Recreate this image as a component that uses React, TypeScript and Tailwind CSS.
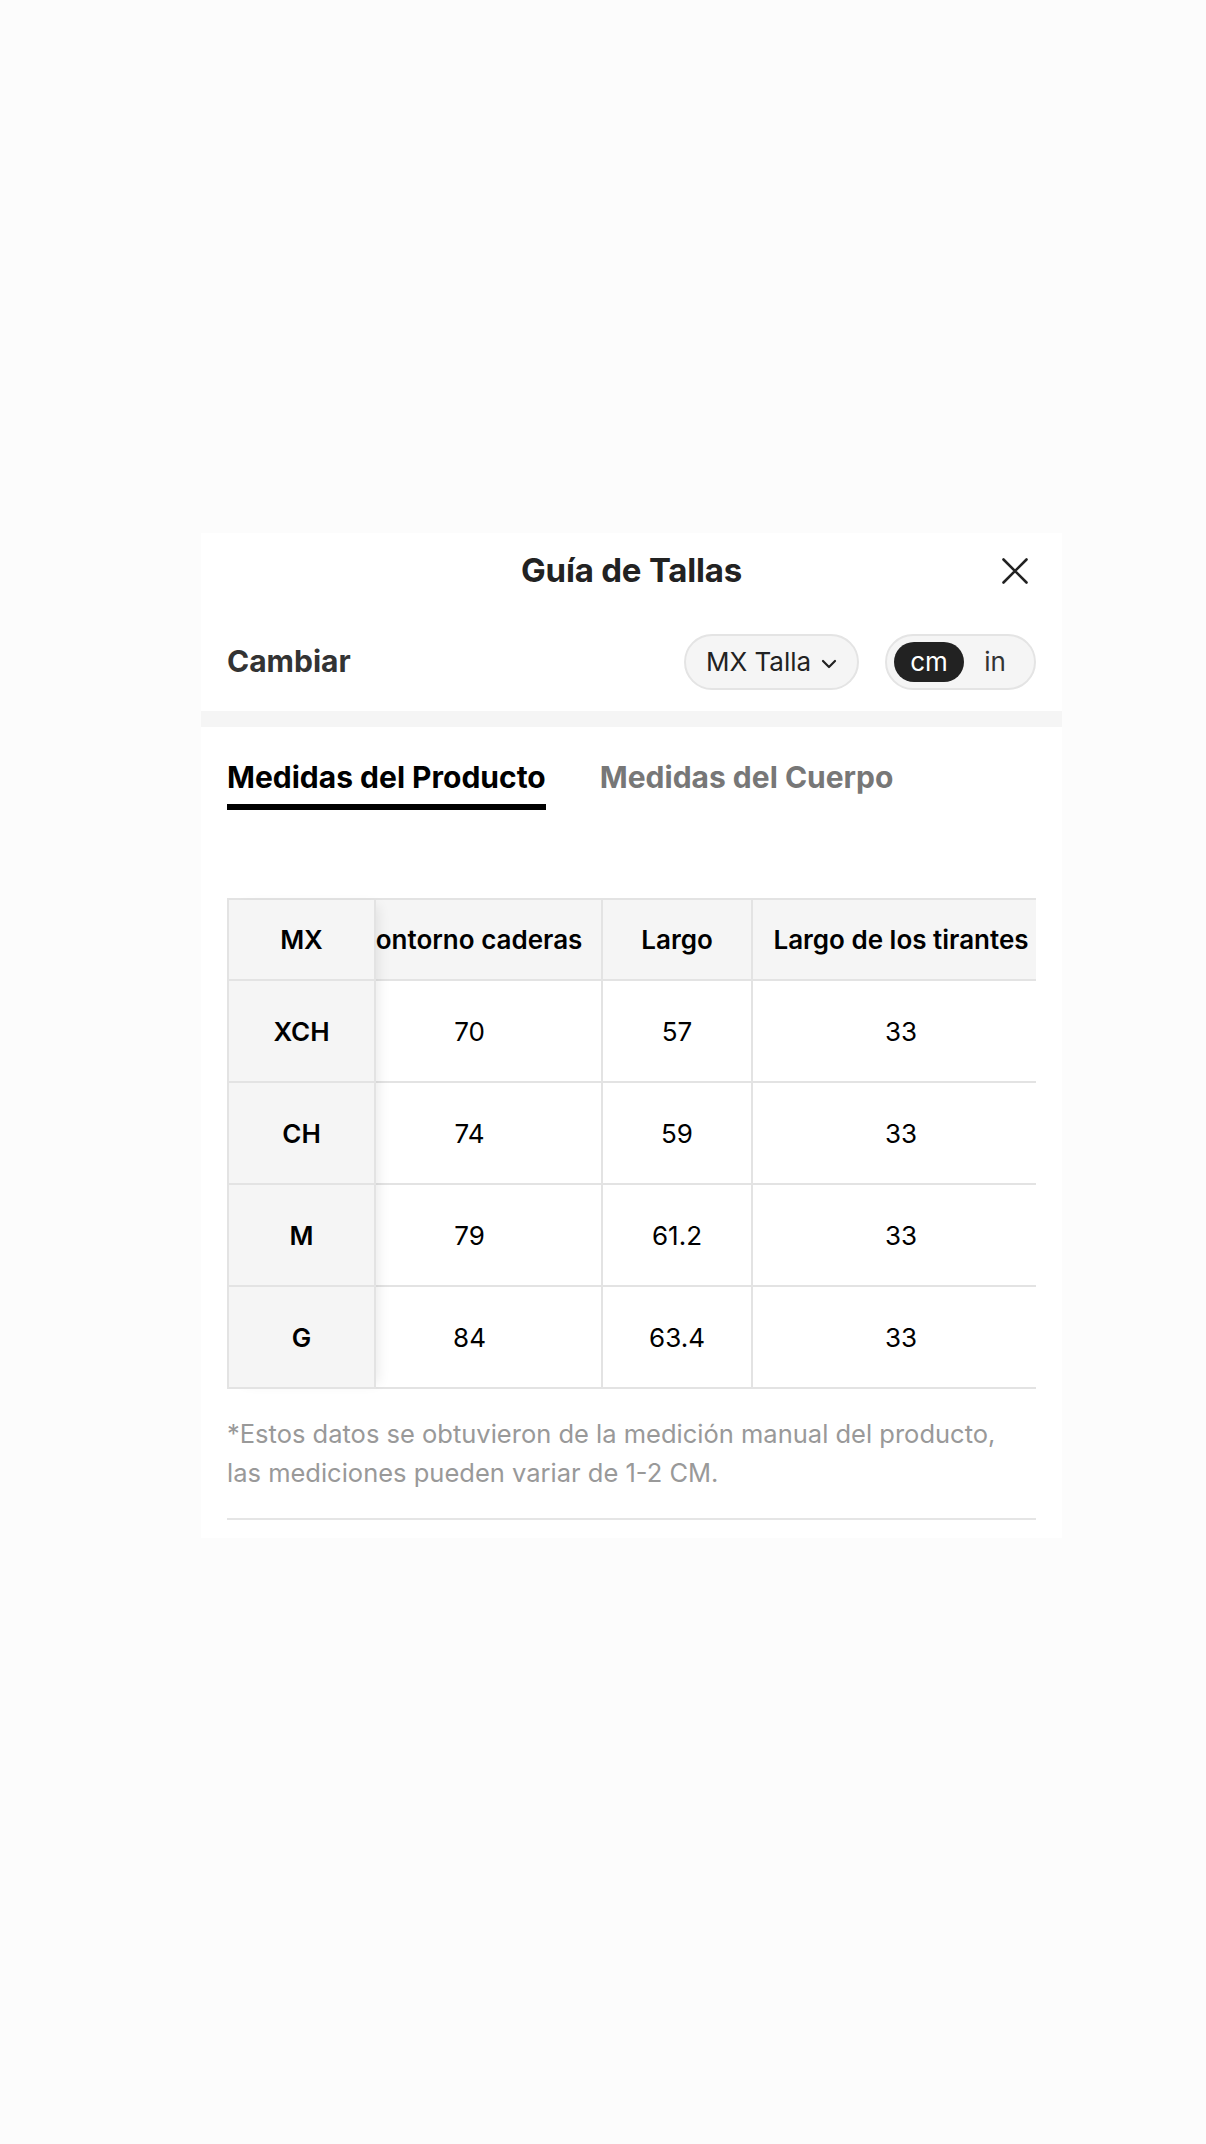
import React from "react";

const font = { fontFamily: 'Inter, "Noto Sans", "Liberation Sans", sans-serif' };

const rows = [
  { s: "XCH", a: "70", b: "57", c: "33" },
  { s: "CH", a: "74", b: "59", c: "33" },
  { s: "M", a: "79", b: "61.2", c: "33" },
  { s: "G", a: "84", b: "63.4", c: "33" },
];

export default function App() {
  return (
    <div className="min-h-[2144px] w-full bg-[#fcfcfc] pt-[533px]" style={font}>
      <div className="ml-[201px] w-[861px] bg-white pb-[18px]">
        {/* Header */}
        <div className="grid h-[75px] grid-cols-[1fr_auto_1fr] items-center pt-[1px]">
          <div />
          <div className="text-[33px] font-bold tracking-[-0.2px] text-[#222]">Guía de Tallas</div>
          <div className="flex justify-end pr-[34px]">
            <svg width="26" height="26" viewBox="0 0 26 26" fill="none">
              <path d="M1.5 1.5 24.5 24.5M24.5 1.5 1.5 24.5" stroke="#222" strokeWidth="2.6" strokeLinecap="round" />
            </svg>
          </div>
        </div>

        {/* Cambiar row */}
        <div className="flex h-[103px] items-center justify-between px-[26px] pt-[4px]">
          <div className="text-[30px] font-bold text-[#333]">Cambiar</div>
          <div className="flex items-center gap-[26px]">
            <div className="flex h-[56px] w-[175px] items-center justify-center gap-[10px] rounded-full border-2 border-[#e4e4e4] bg-[#f5f5f5]">
              <span className="text-[26px] text-[#222]">MX Talla</span>
              <svg width="16" height="10" viewBox="0 0 16 10" fill="none" className="mt-[4px]">
                <path d="M2 2 8 8 14 2" stroke="#222" strokeWidth="2.2" strokeLinecap="round" strokeLinejoin="round" />
              </svg>
            </div>
            <div className="flex h-[56px] w-[151px] items-center rounded-full border-2 border-[#e4e4e4] bg-[#f5f5f5] pl-[7px]">
              <div className="flex h-[40px] w-[70px] items-center justify-center rounded-full bg-[#222] text-[26px] text-white">
                cm
              </div>
              <div className="flex flex-1 justify-center pr-[8px] text-[26px] text-[#333]">in</div>
            </div>
          </div>
        </div>

        {/* gray band */}
        <div className="h-[16px] bg-[#f5f5f5]" />

        {/* Tabs */}
        <div className="flex gap-[54px] px-[26px] pt-[32px]">
          <div className="flex flex-col">
            <div className="text-[30px] font-bold leading-[36px] text-black">Medidas del Producto</div>
            <div className="mt-[9px] h-[6px] bg-black" />
          </div>
          <div className="text-[30px] font-bold leading-[36px] text-[#777]">Medidas del Cuerpo</div>
        </div>

        {/* Table */}
        <div className="mx-[26px] mt-[88px] flex w-[809px] border-l-2 border-t-2 border-[#e3e3e3]">
          <div className="relative z-10 flex w-[147px] shrink-0 flex-col bg-[#f5f5f5] shadow-[8px_0_12px_-6px_rgba(0,0,0,0.09)]">
            <div className="flex h-[81px] items-center justify-center border-b-2 border-r-2 border-[#e3e3e3] text-[26px] font-semibold text-black">
              MX
            </div>
            {rows.map((r) => (
              <div
                key={r.s}
                className="flex h-[102px] items-center justify-center border-b-2 border-r-2 border-[#e3e3e3] text-[26px] font-semibold text-black"
              >
                {r.s}
              </div>
            ))}
          </div>
          <div className="flex-1 overflow-hidden">
            <div className="-ml-[38px] flex w-[713px] flex-col">
              <div className="flex h-[81px] bg-[#f5f5f5] text-[26px] font-semibold text-black">
                <div className="flex w-[265px] shrink-0 items-center justify-center border-b-2 border-r-2 border-[#e3e3e3] whitespace-nowrap">
                  Contorno caderas
                </div>
                <div className="flex w-[150px] shrink-0 items-center justify-center border-b-2 border-r-2 border-[#e3e3e3]">
                  Largo
                </div>
                <div className="flex w-[298px] shrink-0 items-center justify-center border-b-2 border-r-2 border-[#e3e3e3] whitespace-nowrap">
                  Largo de los tirantes
                </div>
              </div>
              {rows.map((r) => (
                <div key={r.s} className="flex h-[102px] bg-white text-[26px] text-black">
                  <div className="flex w-[265px] shrink-0 items-center justify-center border-b-2 border-r-2 border-[#e3e3e3]">
                    {r.a}
                  </div>
                  <div className="flex w-[150px] shrink-0 items-center justify-center border-b-2 border-r-2 border-[#e3e3e3]">
                    {r.b}
                  </div>
                  <div className="flex w-[298px] shrink-0 items-center justify-center border-b-2 border-r-2 border-[#e3e3e3]">
                    {r.c}
                  </div>
                </div>
              ))}
            </div>
          </div>
        </div>

        {/* Footnote */}
        <div className="mx-[26px] mt-[25px] text-[25.5px] leading-[39px] text-[#999]">
          *Estos datos se obtuvieron de la medición manual del producto,
          <br />
          las mediciones pueden variar de 1-2 CM.
        </div>
        <div className="mx-[26px] mt-[26px] h-[2px] bg-[#e5e5e5]" />
      </div>
    </div>
  );
}
